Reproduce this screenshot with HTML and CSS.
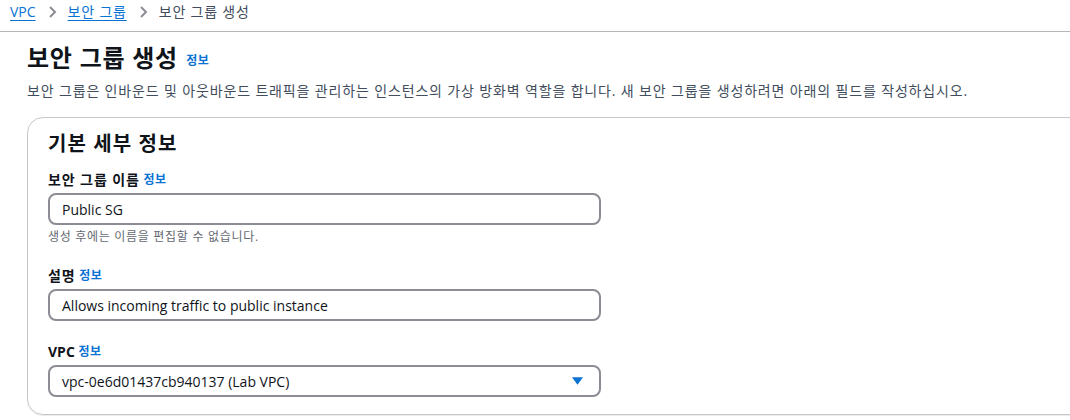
FILE: index.html
```html
<!DOCTYPE html>
<html lang="ko">
<head>
<meta charset="utf-8">
<link rel="stylesheet" href="styles.css">
</head>
<body>
<nav class="crumbs">
  <a class="crumb-link" href="#">VPC</a>
  <svg class="chev" viewBox="0 0 16 16" width="16" height="16"><path d="M6 3l5 5-5 5" fill="none" stroke="#8c8c94" stroke-width="2"/></svg>
  <a class="crumb-link ko" href="#">보안 그룹</a>
  <svg class="chev" viewBox="0 0 16 16" width="16" height="16"><path d="M6 3l5 5-5 5" fill="none" stroke="#8c8c94" stroke-width="2"/></svg>
  <span class="crumb-current ko">보안 그룹 생성</span>
</nav>
<main class="page">
  <header class="page-head">
    <h1 class="title"><span class="title-text">보안 그룹 생성</span> <a class="info" href="#">정보</a></h1>
    <p class="desc">보안 그룹은 인바운드 및 아웃바운드 트래픽을 관리하는 인스턴스의 가상 방화벽 역할을 합니다. 새 보안 그룹을 생성하려면 아래의 필드를 작성하십시오.</p>
  </header>
  <section class="card">
    <h2 class="card-title">기본 세부 정보</h2>
    <div class="fields">
      <div class="field">
        <label class="label"><span class="label-text">보안 그룹 이름</span> <a class="info" href="#">정보</a></label>
        <div class="input">Public SG</div>
        <div class="hint">생성 후에는 이름을 편집할 수 없습니다.</div>
      </div>
      <div class="field">
        <label class="label"><span class="label-text">설명</span> <a class="info" href="#">정보</a></label>
        <div class="input">Allows incoming traffic to public instance</div>
      </div>
      <div class="field">
        <label class="label"><span>VPC</span> <a class="info" href="#">정보</a></label>
        <div class="input select">
          <span>vpc-0e6d01437cb940137 (Lab VPC)</span>
          <svg class="caret" viewBox="0 0 12 8" width="11" height="8"><path d="M0 0h12L6 8z" fill="#0972d3"/></svg>
        </div>
      </div>
    </div>
  </section>
</main>
</body>
</html>
```
FILE: styles.css
```css
* { box-sizing: border-box; }
html, body { margin: 0; padding: 0; background: #ffffff; }
body {
  font-family: "Open Sans", "Noto Sans CJK KR", sans-serif;
  color: #0f141a;
  font-size: 14px;
  width: 1070px;
  height: 420px;
  overflow: hidden;
}
.crumbs {
  display: flex;
  align-items: center;
  height: 32px;
  padding: 0 0 8px 10px;
  border-bottom: 1px solid #b4b4bb;
  font-size: 14px;
  line-height: 20px;
  gap: 8px;
}
.ko { letter-spacing: 0.8px; }
.crumb-link { color: #0972d3; text-decoration: underline; text-underline-offset: 3px; }
.crumb-current { color: #414d5c; }
.chev { display: block; }
.page { padding: 0 0 0 27px; }
.page-head { padding-top: 10px; }
.title {
  margin: 0;
  font-size: 24px;
  line-height: 32px;
  font-weight: 700;
  color: #0f141a;
}
.title-text { letter-spacing: 0.75px; }
.info {
  font-size: 12px;
  font-weight: 700;
  color: #0972d3;
  text-decoration: none;
  letter-spacing: 0.6px;
  vertical-align: 1px;
}
.title .info { margin-left: 2px; vertical-align: 2px; }
.desc {
  margin: 4px 0 0;
  font-size: 14px;
  line-height: 20px;
  color: #414d5c;
  letter-spacing: 0.85px;
  white-space: nowrap;
}
.card {
  margin-top: 16px;
  width: 1080px;
  border: 1px solid #c6c6cd;
  border-radius: 16px;
  padding: 12px 20px 17px 20px;
  box-shadow: 0 1px 1px rgba(0,7,22,0.08);
}
.card-title {
  margin: 0;
  font-size: 20px;
  line-height: 28px;
  font-weight: 700;
  letter-spacing: 1.1px;
}
.fields {
  margin-top: 12px;
  display: flex;
  flex-direction: column;
  gap: 21px;
  width: 553px;
}
.label {
  display: block;
  font-size: 14px;
  line-height: 20px;
  font-weight: 700;
  margin-bottom: 3px;
}
.label-text { letter-spacing: 0.9px; }
.input {
  height: 32px;
  border: 2px solid #8c8c94;
  border-radius: 8px;
  padding: 0 12px;
  display: flex;
  align-items: center;
  font-size: 14px;
  color: #0f141a;
}
.select { justify-content: space-between; padding-right: 16px; }
.caret { display: block; }
.hint {
  margin-top: 4px;
  font-size: 12px;
  line-height: 16px;
  color: #656871;
  letter-spacing: 0.7px;
}
```
